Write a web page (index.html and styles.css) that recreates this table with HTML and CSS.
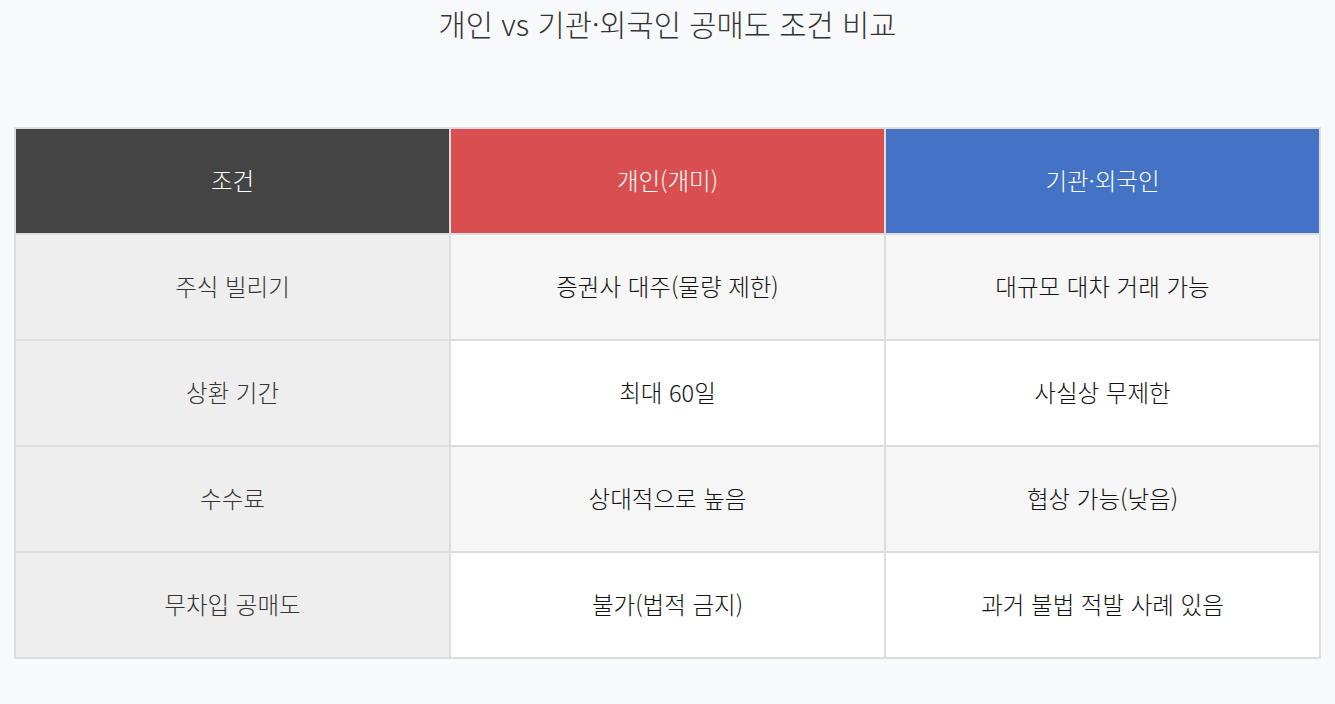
FILE: index.html
```html
<!DOCTYPE html>
<html lang="ko">
<head>
<meta charset="utf-8">
<link rel="stylesheet" href="styles.css">
</head>
<body>
<h1 class="title">개인 vs 기관·외국인 공매도 조건 비교</h1>
<table class="cmp">
  <thead>
    <tr>
      <th class="h-cond">조건</th>
      <th class="h-ind">개인(개미)</th>
      <th class="h-inst">기관·외국인</th>
    </tr>
  </thead>
  <tbody>
    <tr>
      <td class="label">주식 빌리기</td>
      <td>증권사 대주(물량 제한)</td>
      <td>대규모 대차 거래 가능</td>
    </tr>
    <tr>
      <td class="label">상환 기간</td>
      <td>최대 60일</td>
      <td>사실상 무제한</td>
    </tr>
    <tr>
      <td class="label">수수료</td>
      <td>상대적으로 높음</td>
      <td>협상 가능(낮음)</td>
    </tr>
    <tr>
      <td class="label">무차입 공매도</td>
      <td>불가(법적 금지)</td>
      <td>과거 불법 적발 사례 있음</td>
    </tr>
  </tbody>
</table>
</body>
</html>
```

FILE: styles.css
```css
html, body {
  margin: 0;
  padding: 0;
  background: #f8f9fa;
}
body {
  font-family: "Noto Sans CJK KR", "Noto Sans", sans-serif;
  padding: 0 14px;
}
.title {
  margin: 0;
  padding-top: 3px;
  height: 127px;
  box-sizing: border-box;
  text-align: center;
  font-size: 29.6px;
  font-weight: 300;
  color: #333;
  line-height: 42px;
}
.cmp {
  width: 100%;
  border-collapse: collapse;
  table-layout: fixed;
  border: 2px solid #ddd;
}
.cmp th, .cmp td {
  border: 2px solid #ddd;
  text-align: center;
  font-size: 23.5px;
  font-weight: 300;
  height: 106px;
  padding: 0 10px 3px;
  box-sizing: border-box;
}
.cmp th {
  color: #fff;
}
.h-cond { background: #444; }
.h-ind { background: #d94f4f; }
.h-inst { background: #4472c4; }
.cmp td {
  color: #111;
}
.cmp tbody tr:nth-child(odd) td { background: #f6f6f6; }
.cmp tbody tr:nth-child(even) td { background: #fff; }
.cmp tbody tr td.label { background: #eee; color: #333; }
```
